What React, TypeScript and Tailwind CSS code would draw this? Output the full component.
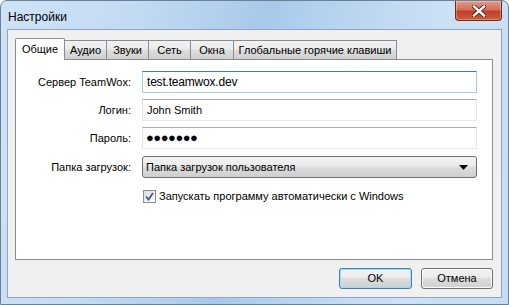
import React from "react";

const font = { fontFamily: '"Liberation Sans", Arial, sans-serif' } as React.CSSProperties;

function Tab({ label, selected, w }: { label: string; selected?: boolean; w: string }) {
  if (selected) {
    return (
      <div
        className={`${w} h-[22px] -mb-px relative z-10 bg-white border border-[#898c95] border-b-0 rounded-t-[2px] flex items-center justify-center text-[11px] text-black whitespace-nowrap`}
      >
        {label}
      </div>
    );
  }
  return (
    <div
      className={`${w} h-[19px] -ml-px first:ml-0 bg-[linear-gradient(#f2f2f2,#ebebeb_45%,#dddddd_50%,#cfcfcf)] border border-[#898c95] border-b-0 flex items-center justify-center text-[11px] text-black whitespace-nowrap`}
    >
      {label}
    </div>
  );
}

export default function App() {
  return (
    <div className="w-[509px] h-[305px] overflow-hidden bg-white" style={font}>
      <div className="w-[509px] h-[305px] rounded-t-[7px] border border-[#6b7f96] bg-[linear-gradient(100deg,#cfe3f6_0%,#c2daf2_25%,#a9c9ea_48%,#b7d3ef_60%,#cde1f5_80%,#c8ddf3_100%)] flex flex-col">
        {/* title bar */}
        <div className="h-[28px] flex items-start relative">
          <div className="pl-[7px] pt-[7px] text-[12px] text-black">Настройки</div>
          <div className="absolute right-[6px] top-0 w-[47px] h-[20px] rounded-b-[4px] border border-[#6b2b20] border-t-0 bg-[linear-gradient(#e49a8a,#d26f5b_45%,#c13f27_55%,#cb5c3d)] flex items-center justify-center shadow-[inset_0_0_0_1px_rgba(255,255,255,0.3)]">
            <svg width="14" height="12" viewBox="0 0 14 12">
              <path d="M2 1.5 L12 10.5 M12 1.5 L2 10.5" stroke="#4a1a12" strokeWidth="4.2" strokeLinecap="square" />
              <path d="M2 1.5 L12 10.5 M12 1.5 L2 10.5" stroke="#ffffff" strokeWidth="2.4" strokeLinecap="square" />
            </svg>
          </div>
        </div>
        {/* client area */}
        <div className="mx-[6px] h-[269px] bg-[#f0f0f0] border border-[#8ea5c0] flex flex-col">
          <div className="pl-[7px] pt-[7px] flex items-end h-[29px]">
            <Tab label="Общие" selected w="w-[50px]" />
            <Tab label="Аудио" w="w-[43px]" />
            <Tab label="Звуки" w="w-[43px]" />
            <Tab label="Сеть" w="w-[43px]" />
            <Tab label="Окна" w="w-[44px]" />
            <Tab label="Глобальные горячие клавиши" w="w-[164px]" />
          </div>
          <div className="ml-[7px] w-[478px] h-[201px] bg-white border border-[#898c95] pt-[11px] text-[11px] text-black">
            <div className="grid grid-cols-[115px_335px] gap-x-[11px] gap-y-[6px] items-center">
              <div className="text-right">Сервер TeamWox:</div>
              <div className="h-[22px] border border-[#a8cbe8] border-t-[#3c7fb1] flex items-center pl-[4px] text-[12px] tracking-[-0.2px]">
                test.teamwox.dev
              </div>
              <div className="text-right">Логин:</div>
              <div className="h-[22px] border border-[#e3e9ef] border-t-[#abadb3] border-l-[#dbdfe6] flex items-center pl-[4px]">
                John Smith
              </div>
              <div className="text-right">Пароль:</div>
              <div className="h-[22px] border border-[#e3e9ef] border-t-[#abadb3] border-l-[#dbdfe6] flex items-center pl-[3px] text-[13px] font-bold tracking-[-0.5px]">
                ●●●●●●●
              </div>
              <div className="text-right mt-px">Папка загрузок:</div>
              <div className="h-[22px] mt-px rounded-[3px] border border-[#707070] bg-[linear-gradient(#f2f2f2,#ebebeb_45%,#dddddd_50%,#cfcfcf)] flex items-center justify-between pl-[3px] pr-[8px]">
                <span>Папка загрузок пользователя</span>
                <svg width="9" height="5" viewBox="0 0 9 5">
                  <path d="M0 0 H9 L4.5 5 Z" fill="#000" />
                </svg>
              </div>
              <div />
              <div className="h-[22px] flex items-center gap-[3px] pl-[1px] mt-[1px]">
                <div className="w-[13px] h-[13px] border border-[#8f8f8f] bg-[linear-gradient(135deg,#dcdcdc,#ffffff)] flex items-center justify-center">
                  <svg width="9" height="9" viewBox="0 0 9 9">
                    <path d="M1 4.5 L3.5 7.5 L8 1" stroke="#3b5a8c" strokeWidth="1.8" fill="none" />
                  </svg>
                </div>
                <span>Запускать программу автоматически с Windows</span>
              </div>
            </div>
          </div>
          <div className="flex justify-end gap-[9px] pr-[8px] pt-[8px] text-[11px] text-black">
            <div className="w-[73px] h-[21px] rounded-[3px] border border-[#3c7fb1] bg-[linear-gradient(#f2f2f2,#ebebeb_45%,#dddddd_50%,#cfcfcf)] shadow-[inset_0_0_0_1px_#9fdcf6] flex items-center justify-center">
              OK
            </div>
            <div className="w-[72px] h-[21px] rounded-[3px] border border-[#707070] bg-[linear-gradient(#f2f2f2,#ebebeb_45%,#dddddd_50%,#cfcfcf)] shadow-[inset_0_0_0_1px_#fcfcfc] flex items-center justify-center">
              Отмена
            </div>
          </div>
        </div>
      </div>
    </div>
  );
}
